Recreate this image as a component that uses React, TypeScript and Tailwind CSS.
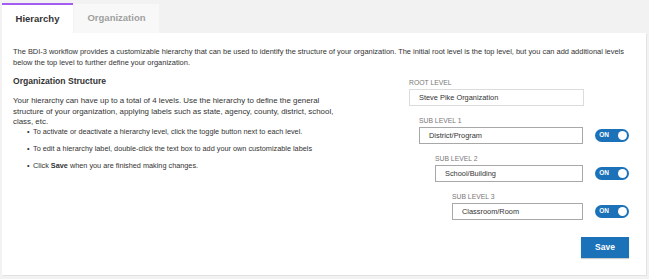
import React from 'react'

const levels = [
  {label: 'SUB LEVEL 1', value: 'District/Program', indent: 'ml-[10px]', width: 'w-[165px]'},
  {label: 'SUB LEVEL 2', value: 'School/Building', indent: 'ml-[26px]', width: 'w-[149px]'},
  {label: 'SUB LEVEL 3', value: 'Classroom/Room', indent: 'ml-[43px]', width: 'w-[132px]'},
]

const bullets = [
  <>To activate or deactivate a hierarchy level, click the toggle button next to each level.</>,
  <>To edit a hierarchy label, double-click the text box to add your own customizable labels</>,
  <>Click <b className="font-bold">Save</b> when you are finished making changes.</>,
]

const Toggle = () => (
  <button
    type="button"
    className="ml-[12px] flex h-[13px] w-[34px] items-center justify-between rounded-full bg-[#1b72b8] pl-[4px] pr-[2px]"
  >
    <span className="text-[6.5px] font-bold leading-none text-white">ON</span>
    <span className="h-[9px] w-[9px] rounded-full bg-white" />
  </button>
)

export default function App() {
  return (
    <main className="min-h-screen bg-[#f2f2f2] pt-[3px] font-['Liberation_Sans',Arial,sans-serif] text-[#333]">
      <section id="tabs" className="ml-[2px] flex h-[30px] items-end">
        <div className="flex h-[30px] w-[71px] items-center justify-center border-t-2 border-[#a45cf2] bg-white text-[9.5px] font-bold text-[#333]">
          Hierarchy
        </div>
        <div className="ml-[1px] flex h-[29px] w-[85px] items-center justify-center bg-[#f8f8f8] text-[9.5px] font-bold text-[#a0a0a0]">
          Organization
        </div>
      </section>

      <section id="panel" className="ml-[2px] h-[242px] w-[644px] bg-white px-[11px] pt-[13px] shadow-[1px_1px_0_#e2e2e2]">
        <p className="text-[7.45px] leading-[11px]">
          The BDI-3 workflow provides a customizable hierarchy that can be used to identify the structure of your organization. The initial root level is the top level, but you can add additional levels below the top level to further define your organization.
        </p>

        <div className="mt-[7px] flex">
          <div className="w-[322px]">
            <h2 className="text-[8.6px] font-bold leading-[12px]">Organization Structure</h2>
            <p className="mt-[9px] text-[7.9px] leading-[10.5px]">
              Your hierarchy can have up to a total of 4 levels. Use the hierarchy to define the general structure of your organization, applying labels such as state, agency, county, district, school, class, etc.
            </p>
            <ul className="mt-[-1px] flex flex-col gap-[7px] pl-[14px] text-[7.3px] leading-[10px]">
              {bullets.map((b, i) => (
                <li key={`bullet-${i}`} className="flex">
                  <span className="w-[6px]">•</span>
                  <span>{b}</span>
                </li>
              ))}
            </ul>
          </div>

          <div className="ml-[74px] w-[220px] pt-[3px]">
            <div className="text-[6.8px] leading-[9px] text-[#777]">ROOT LEVEL</div>
            <div className="mt-[2px] flex h-[17px] w-[175px] items-center border border-[#dcdcdc] px-[9px] text-[7.4px]">
              Steve Pike Organization
            </div>

            {levels.map((level, i) => (
              <div key={`level-${i}`} className={`mt-[10px] ${level.indent}`}>
                <div className="text-[6.8px] leading-[9px] text-[#777]">{level.label}</div>
                <div className="mt-[2px] flex items-center">
                  <div className={`flex h-[17px] items-center border border-[#a8a8a8] px-[9px] text-[7.4px] ${level.width}`}>
                    {level.value}
                  </div>
                  <Toggle />
                </div>
              </div>
            ))}

            <div className="mt-[17px] flex justify-end">
              <button
                type="button"
                className="h-[21px] w-[48px] bg-[#1b72b8] text-[8.5px] font-bold text-white shadow-[0_1px_1px_rgba(0,0,0,0.2)]"
              >
                Save
              </button>
            </div>
          </div>
        </div>
      </section>
    </main>
  )
}
